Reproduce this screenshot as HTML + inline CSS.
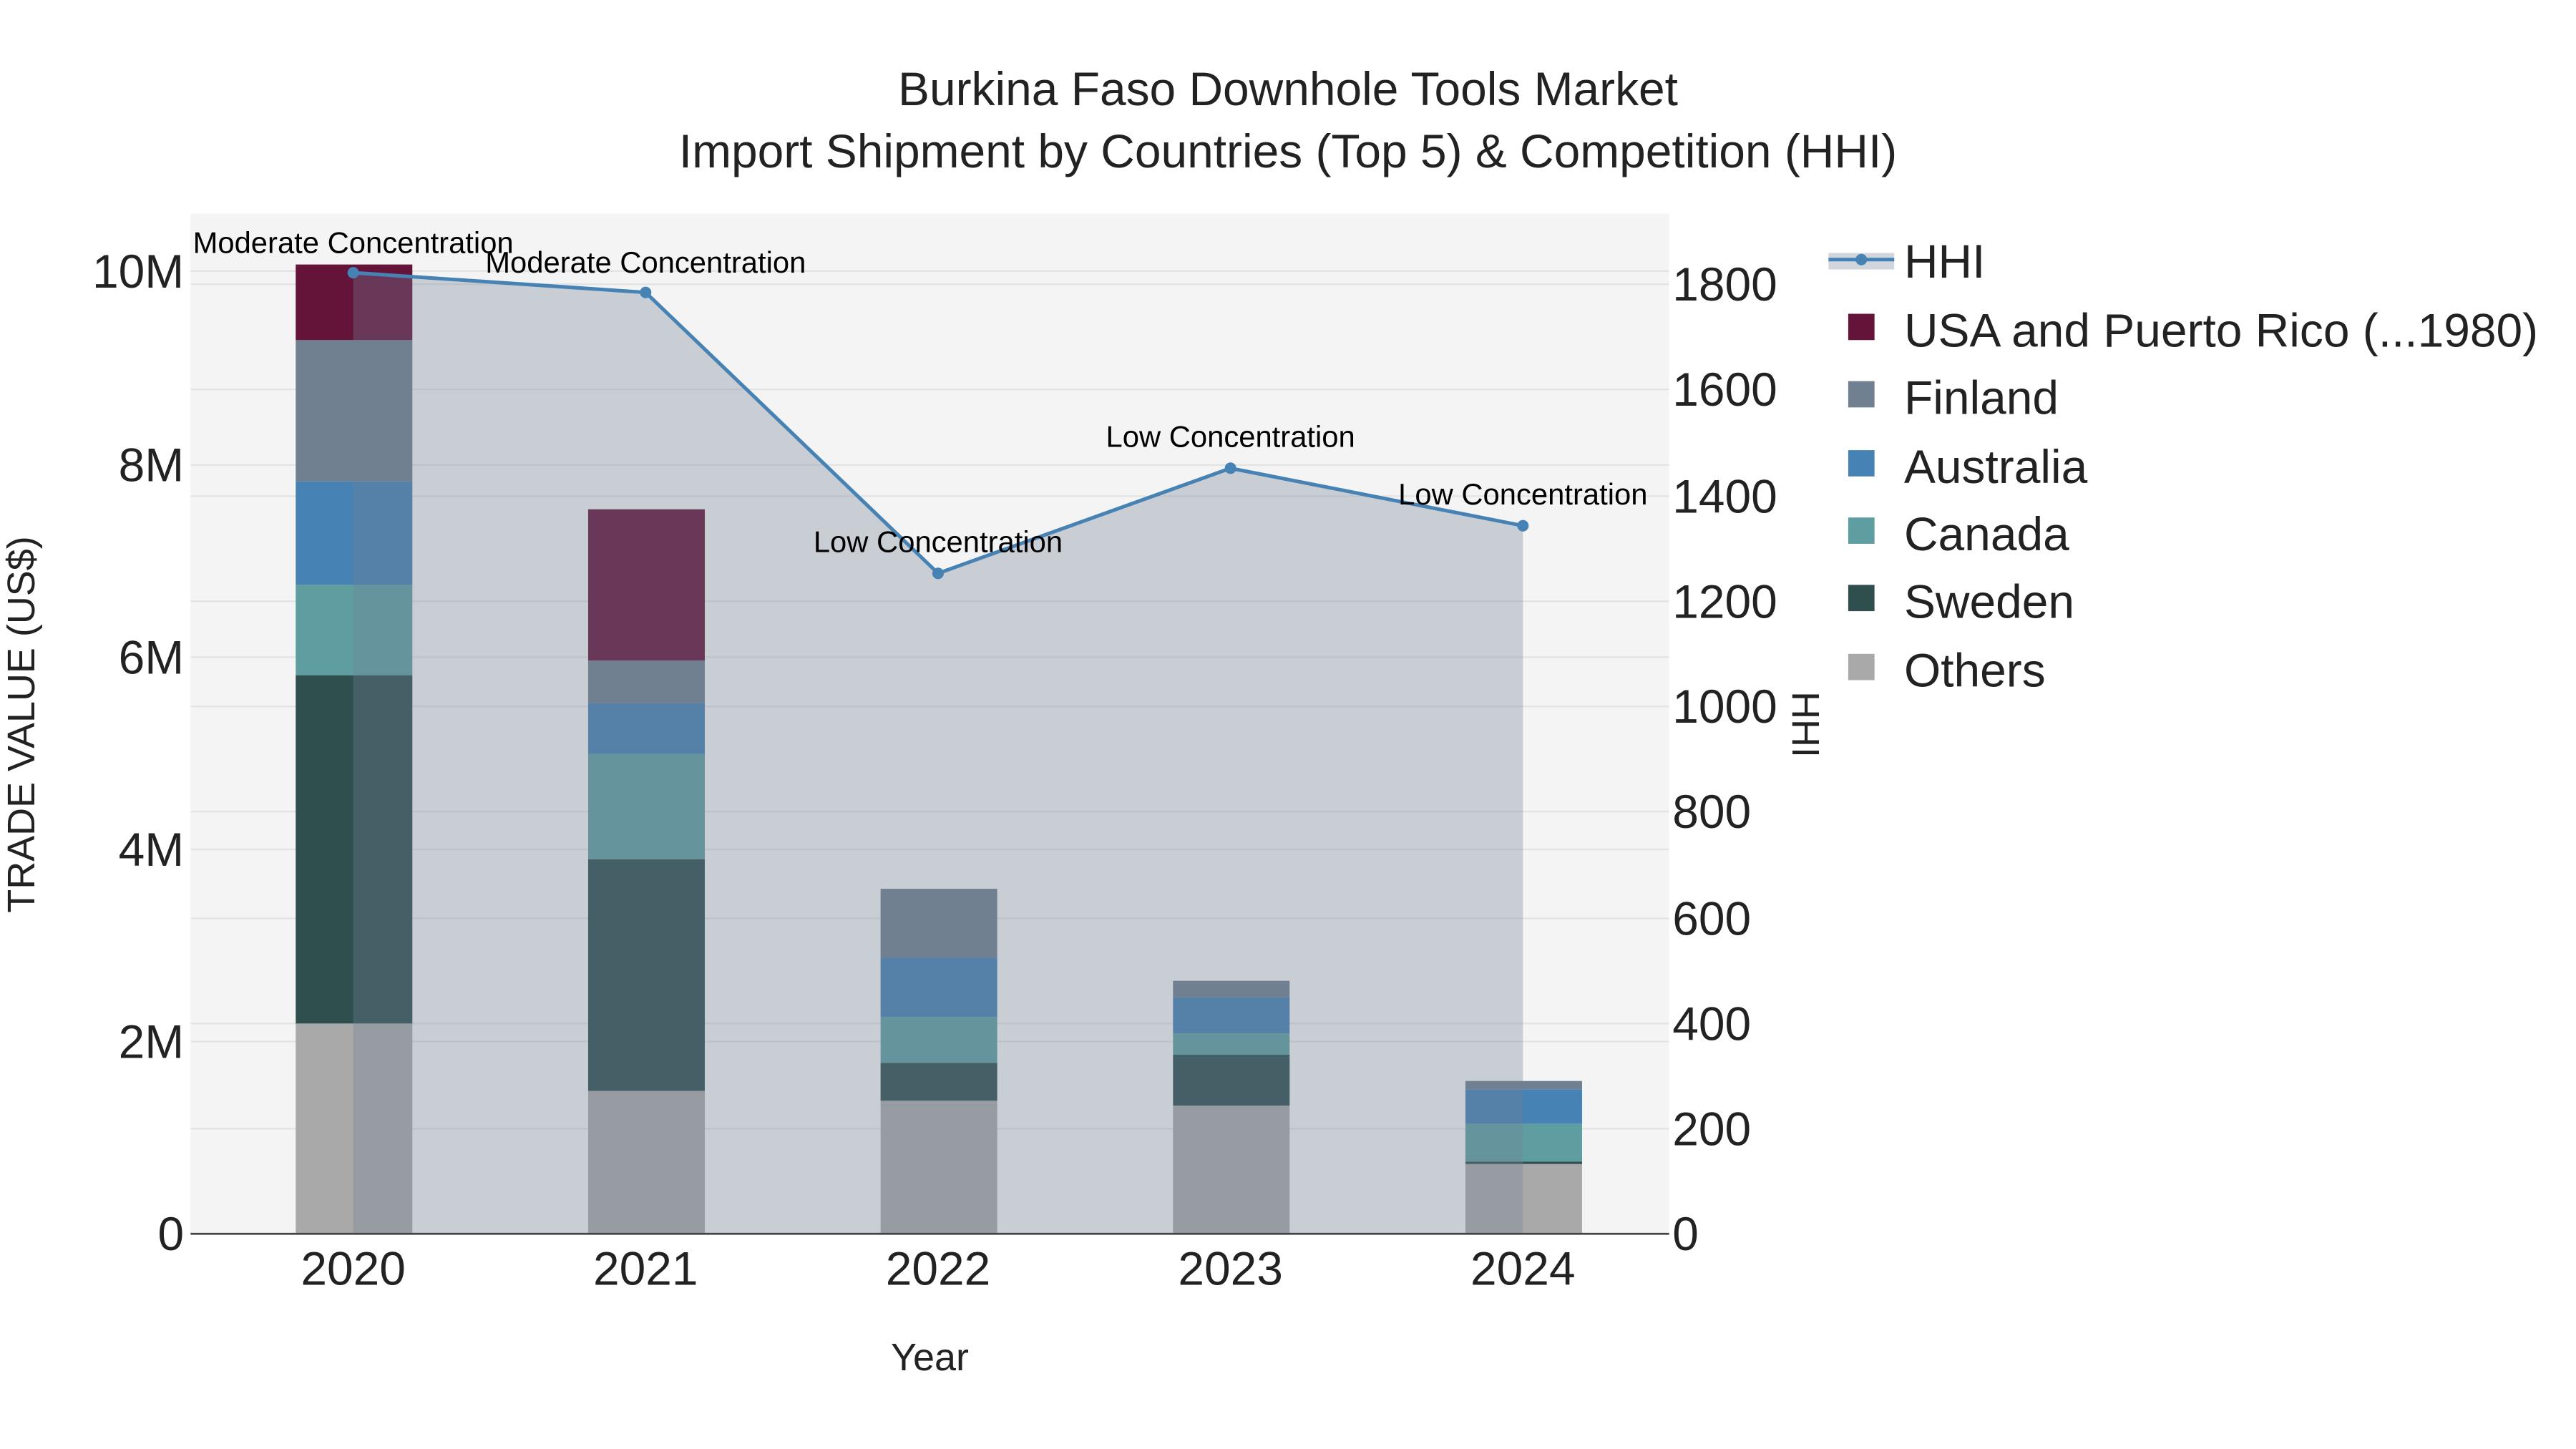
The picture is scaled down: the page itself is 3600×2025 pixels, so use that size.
<!DOCTYPE html>
<html><head><meta charset="utf-8"><style>
html,body{margin:0;padding:0;background:#fff;}
svg{display:block;}
text{font-family:"Liberation Sans",Arial,sans-serif;}
</style></head><body>
<svg width="3600" height="2025" viewBox="0 0 1568 882" xmlns="http://www.w3.org/2000/svg">
<rect width="1568" height="882" fill="#fff"/>
<rect x="116" y="130" width="900" height="621" fill="#f4f4f4"/>
<g stroke="#e3e3e3" stroke-width="1">
<line x1="116" x2="1016" y1="634" y2="634"/><line x1="116" x2="1016" y1="517" y2="517"/>
<line x1="116" x2="1016" y1="400" y2="400"/><line x1="116" x2="1016" y1="283" y2="283"/>
<line x1="116" x2="1016" y1="165" y2="165"/>
<line x1="116" x2="1016" y1="687" y2="687"/><line x1="116" x2="1016" y1="623" y2="623"/>
<line x1="116" x2="1016" y1="559" y2="559"/><line x1="116" x2="1016" y1="494" y2="494"/>
<line x1="116" x2="1016" y1="430" y2="430"/><line x1="116" x2="1016" y1="366" y2="366"/>
<line x1="116" x2="1016" y1="302" y2="302"/><line x1="116" x2="1016" y1="237" y2="237"/>
<line x1="116" x2="1016" y1="173" y2="173"/>
</g>
<g>
<rect x="180" y="623" width="71" height="128" fill="#a9a9a9"/>
<rect x="180" y="411" width="71" height="212" fill="#2f4f4f"/>
<rect x="180" y="356" width="71" height="55" fill="#5f9ea0"/>
<rect x="180" y="293" width="71" height="63" fill="#4682b4"/>
<rect x="180" y="207" width="71" height="86" fill="#708090"/>
<rect x="180" y="161" width="71" height="46" fill="#641439"/>
<rect x="358" y="664" width="71" height="87" fill="#a9a9a9"/>
<rect x="358" y="523" width="71" height="141" fill="#2f4f4f"/>
<rect x="358" y="459" width="71" height="64" fill="#5f9ea0"/>
<rect x="358" y="428" width="71" height="31" fill="#4682b4"/>
<rect x="358" y="402" width="71" height="26" fill="#708090"/>
<rect x="358" y="310" width="71" height="92" fill="#641439"/>
<rect x="536" y="670" width="71" height="81" fill="#a9a9a9"/>
<rect x="536" y="647" width="71" height="23" fill="#2f4f4f"/>
<rect x="536" y="619" width="71" height="28" fill="#5f9ea0"/>
<rect x="536" y="583" width="71" height="36" fill="#4682b4"/>
<rect x="536" y="541" width="71" height="42" fill="#708090"/>
<rect x="714" y="673" width="71" height="78" fill="#a9a9a9"/>
<rect x="714" y="642" width="71" height="31" fill="#2f4f4f"/>
<rect x="714" y="629" width="71" height="13" fill="#5f9ea0"/>
<rect x="714" y="607" width="71" height="22" fill="#4682b4"/>
<rect x="714" y="597" width="71" height="10" fill="#708090"/>
<rect x="892" y="708" width="71" height="43" fill="#a9a9a9"/>
<rect x="892" y="707" width="71" height="1.5" fill="#2f4f4f"/>
<rect x="892" y="684" width="71" height="23" fill="#5f9ea0"/>
<rect x="892" y="663" width="71" height="21" fill="#4682b4"/>
<rect x="892" y="658" width="71" height="5" fill="#708090"/>
</g>
<polygon points="215,751 215,166 393,178 571,349 749,285 927,320 927,751" fill="rgb(115,128,150)" fill-opacity="0.33"/>
<polyline points="215,166 393,178 571,349 749,285 927,320" fill="none" stroke="#4682b4" stroke-width="2.2"/>
<g fill="#4682b4"><circle cx="215" cy="166" r="3.5"/><circle cx="393" cy="178" r="3.5"/><circle cx="571" cy="349" r="3.5"/><circle cx="749" cy="285" r="3.5"/><circle cx="927" cy="320" r="3.5"/></g>
<line x1="116" x2="1016" y1="751" y2="751" stroke="#444" stroke-width="1.2"/>
<g font-size="18.2" fill="#000" text-anchor="middle">
<text x="215" y="154">Moderate Concentration</text>
<text x="393" y="166">Moderate Concentration</text>
<text x="571" y="336">Low Concentration</text>
<text x="749" y="272">Low Concentration</text>
<text x="927" y="307">Low Concentration</text>
</g>
<g font-size="28.7" fill="#222" text-anchor="middle">
<text x="784" y="64">Burkina Faso Downhole Tools Market</text>
<text x="784" y="102">Import Shipment by Countries (Top 5) &amp; Competition (HHI)</text>
</g>
<g font-size="28.7" fill="#222" text-anchor="end">
<text x="112" y="761">0</text><text x="112" y="644">2M</text><text x="112" y="527">4M</text>
<text x="112" y="410">6M</text><text x="112" y="293">8M</text><text x="112" y="175">10M</text>
</g>
<g font-size="28.7" fill="#222" text-anchor="start">
<text x="1018" y="761">0</text><text x="1018" y="697">200</text><text x="1018" y="633">400</text>
<text x="1018" y="569">600</text><text x="1018" y="504">800</text><text x="1018" y="440">1000</text>
<text x="1018" y="376">1200</text><text x="1018" y="312">1400</text><text x="1018" y="247">1600</text>
<text x="1018" y="183">1800</text>
</g>
<g font-size="28.7" fill="#222" text-anchor="middle">
<text x="215" y="782">2020</text><text x="393" y="782">2021</text><text x="571" y="782">2022</text>
<text x="749" y="782">2023</text><text x="927" y="782">2024</text>
</g>
<text x="566" y="834" font-size="23.5" fill="#222" text-anchor="middle">Year</text>
<text transform="translate(21,441) rotate(-90)" font-size="23.5" fill="#222" text-anchor="middle">TRADE VALUE (US$)</text>
<text transform="translate(1091,441) rotate(90)" font-size="23.5" fill="#222" text-anchor="middle">HHI</text>
<rect x="1113" y="154" width="40" height="10" fill="rgb(115,128,150)" fill-opacity="0.33"/>
<line x1="1113" x2="1153" y1="158" y2="158" stroke="#4682b4" stroke-width="2.2"/>
<circle cx="1133" cy="158" r="3.5" fill="#4682b4"/>
<rect x="1125" y="191" width="16" height="16" fill="#641439"/>
<rect x="1125" y="232" width="16" height="16" fill="#708090"/>
<rect x="1125" y="274" width="16" height="16" fill="#4682b4"/>
<rect x="1125" y="315" width="16" height="16" fill="#5f9ea0"/>
<rect x="1125" y="356" width="16" height="16" fill="#2f4f4f"/>
<rect x="1125" y="398" width="16" height="16" fill="#a9a9a9"/>
<g font-size="28.7" fill="#222">
<text x="1159" y="169">HHI</text>
<text x="1159" y="211">USA and Puerto Rico (...1980)</text>
<text x="1159" y="252">Finland</text>
<text x="1159" y="294">Australia</text>
<text x="1159" y="335">Canada</text>
<text x="1159" y="376">Sweden</text>
<text x="1159" y="418">Others</text>
</g>
</svg>
</body></html>
